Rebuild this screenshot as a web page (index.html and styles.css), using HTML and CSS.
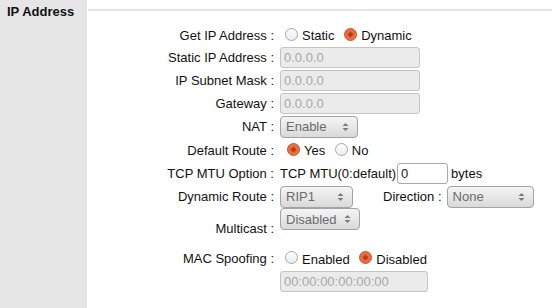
FILE: index.html
```html
<!DOCTYPE html>
<html lang="en">
<head>
  <meta charset="UTF-8" />
  <title>IP Address</title>
  <link rel="stylesheet" href="styles.css">
</head>
<body>
  <div class="page">
    <div class="side">
      <h2>IP Address</h2>
    </div>

    <div class="main">
      <table class="form">
        <tr class="r1">
          <td class="lbl">Get IP Address :</td>
          <td>
            <label class="opt"><span class="radio"></span>Static</label>
            <label class="opt"><span class="radio on"></span>Dynamic</label>
          </td>
        </tr>
        <tr class="r2">
          <td class="lbl">Static IP Address :</td>
          <td><div class="field off">0.0.0.0</div></td>
        </tr>
        <tr class="r3">
          <td class="lbl">IP Subnet Mask :</td>
          <td><div class="field off">0.0.0.0</div></td>
        </tr>
        <tr class="r3">
          <td class="lbl">Gateway :</td>
          <td><div class="field off">0.0.0.0</div></td>
        </tr>
        <tr class="r3">
          <td class="lbl">NAT :</td>
          <td>
            <div class="sel w78"><span>Enable</span>
              <svg width="7" height="10" viewBox="0 0 7 10"><path d="M0.5 4 L3.5 1 L6.5 4 Z M0.5 6 L3.5 9 L6.5 6 Z" fill="#7a7a7a"/></svg>
            </div>
          </td>
        </tr>
        <tr class="r4">
          <td class="lbl">Default Route :</td>
          <td>
            <label class="opt first"><span class="radio on"></span>Yes</label>
            <label class="opt"><span class="radio"></span>No</label>
          </td>
        </tr>
        <tr class="r3">
          <td class="lbl">TCP MTU Option :</td>
          <td>
            <div class="line">TCP MTU(0:default)<div class="field mtu">0</div>bytes</div>
          </td>
        </tr>
        <tr class="r3">
          <td class="lbl">Dynamic Route :</td>
          <td>
            <div class="line">
              <div class="sel w73"><span>RIP1</span>
                <svg width="7" height="10" viewBox="0 0 7 10"><path d="M0.5 4 L3.5 1 L6.5 4 Z M0.5 6 L3.5 9 L6.5 6 Z" fill="#7a7a7a"/></svg>
              </div>
              <span class="dir">Direction :</span>
              <div class="sel w87"><span>None</span>
                <svg width="7" height="10" viewBox="0 0 7 10"><path d="M0.5 4 L3.5 1 L6.5 4 Z M0.5 6 L3.5 9 L6.5 6 Z" fill="#7a7a7a"/></svg>
              </div>
            </div>
          </td>
        </tr>
        <tr class="r5">
          <td class="lbl">Multicast :</td>
          <td class="top">
            <div class="sel w80"><span>Disabled</span>
              <svg width="7" height="10" viewBox="0 0 7 10"><path d="M0.5 4 L3.5 1 L6.5 4 Z M0.5 6 L3.5 9 L6.5 6 Z" fill="#7a7a7a"/></svg>
            </div>
          </td>
        </tr>
        <tr class="r6">
          <td class="lbl">MAC Spoofing :</td>
          <td>
            <label class="opt"><span class="radio"></span>Enabled</label>
            <label class="opt"><span class="radio on"></span>Disabled</label>
          </td>
        </tr>
        <tr class="r7">
          <td></td>
          <td class="top"><div class="field off mac">00:00:00:00:00:00</div></td>
        </tr>
      </table>
    </div>
  </div>
</body>
</html>
```

FILE: styles.css
```css
body {
  margin: 0;
  padding: 0;
  background: #fff;
  color: #111;
  font-family: "Liberation Sans", Arial, sans-serif;
  font-size: 13px;
}
.page {
  display: flex;
  min-height: 308px;
}
.side {
  width: 87px;
  flex: none;
  background: #e6e6e6;
}
.side h2 {
  margin: 0;
  padding: 4px 7px;
  font-size: 13px;
  line-height: 16px;
  font-weight: bold;
}
.main {
  flex: 1;
  margin-top: 9px;
  border-top: 2px solid #e4e4e4;
  margin-left: 1px;
}
.form {
  border-collapse: collapse;
  margin-top: 13px;
  margin-left: -1px;
}
.form td {
  padding: 0;
  vertical-align: middle;
}
.form td.lbl {
  width: 187px;
  padding-right: 2px;
  text-align: right;
  white-space: nowrap;
}
.form td + td {
  padding-left: 4px;
}
.form td.top {
  vertical-align: top;
}
.r1 { height: 22px; }
.r2 { height: 23px; }
.r3 { height: 23px; }
.r4 { height: 24px; }
.r5 { height: 39px; }
.r6 { height: 23px; }
.r7 { height: 22px; }
.r5 td.lbl {
  padding-top: 2px;
}

.opt {
  display: inline-flex;
  align-items: center;
  margin-left: 5px;
  margin-right: 1px;
  padding-top: 2px;
}
.opt.first {
  margin-left: 7px;
}
.radio {
  width: 11px;
  height: 11px;
  border: 1px solid #a9a9a9;
  border-radius: 50%;
  background: linear-gradient(#fdfdfd, #ececec);
  margin-right: 4px;
  margin-top: -3px;
  box-sizing: content-box;
}
.radio.on {
  border-color: #d2512a;
  background: radial-gradient(circle at 50% 50%, #b73d1a 0, #b73d1a 2px, #e9643a 2.5px, #f07a4c 100%);
}

.field {
  box-sizing: border-box;
  height: 21px;
  line-height: 19px;
  width: 140px;
  border: 1px solid #c4c4c4;
  border-radius: 3px;
  padding: 0 3px;
  background: #fff;
  color: #222;
}
.field.off {
  background: #ebebeb;
  color: #a8a8a8;
}
.field.mac {
  width: 148px;
  margin-top: 1px;
}
.field.mtu {
  width: 51px;
  border-color: #a8a8a8;
  margin: 0 3px 0 1px;
  display: inline-block;
}
.line {
  display: flex;
  align-items: center;
}

.sel {
  box-sizing: border-box;
  height: 22px;
  display: flex;
  align-items: center;
  justify-content: space-between;
  padding: 0 8px 0 5px;
  border: 1px solid #a3a3a3;
  border-radius: 4px;
  background: linear-gradient(#f5f5f5, #d9d9d9);
  color: #6c6c6c;
}
.w73 { width: 73px; }
.w78 { width: 78px; }
.w80 { width: 80px; }
.w87 { width: 87px; }
.dir {
  margin: 0 5px 0 30px;
  color: #111;
}
```
